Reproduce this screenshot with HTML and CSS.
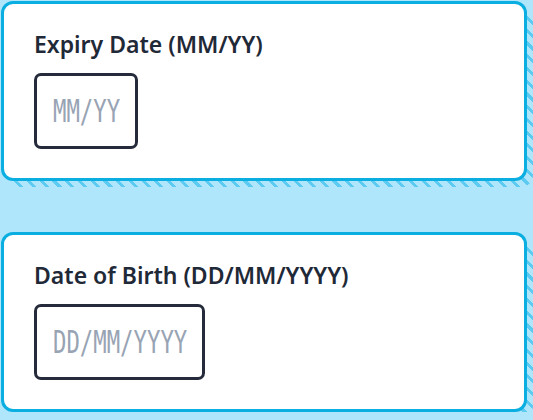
FILE: index.html
```html
<!DOCTYPE html>
<html lang="en">
<head>
<meta charset="utf-8">
<title>Date fields</title>
<link rel="stylesheet" href="styles.css">
</head>
<body>
  <div class="card">
    <label class="label" for="expiry">Expiry Date (MM/YY)</label>
    <div class="field">
      <input id="expiry" class="input w5" type="text" placeholder="MM/YY">
    </div>
  </div>
  <div class="card">
    <label class="label" for="dob">Date of Birth (DD/MM/YYYY)</label>
    <div class="field">
      <input id="dob" class="input w10" type="text" placeholder="DD/MM/YYYY">
    </div>
  </div>
</body>
</html>
```
FILE: styles.css
```css
html {
  background: #b0e6fb;
}
body {
  margin: 0;
  padding: 1px 6px 0 1px;
  font-family: "Noto Sans", "Open Sans", sans-serif;
}
.card {
  position: relative;
  display: flex;
  flex-direction: column;
  align-items: flex-start;
  gap: 14px;
  background: #fff;
  border: 3px solid #0aaee0;
  border-radius: 12px;
  padding: 25px 30px 29px;
  margin-bottom: 51px;
}
.card:last-child {
  margin-bottom: 0;
}
.card::before {
  content: "";
  position: absolute;
  top: 3px;
  left: 3px;
  right: -9px;
  bottom: -9px;
  z-index: -1;
  border-radius: 12px;
  background: repeating-linear-gradient(45deg, #5ccaf1 0 3px, transparent 3px 9px);
}
.label {
  font-size: 23px;
  font-weight: 600;
  line-height: 30px;
  color: #1f2937;
}
.field {
  display: flex;
  align-items: center;
  height: 70px;
  padding: 0 15px 0 16px;
  border: 3px solid #252b3a;
  border-radius: 7px;
  background: #fff;
}
.input {
  border: none;
  outline: none;
  padding: 0;
  margin: 0;
  background: transparent;
  font-family: "DejaVu Sans Mono", monospace;
  font-size: 22.3px;
  line-height: 30px;
  height: 30px;
  color: #1f2937;
  transform: scaleY(1.4);
}
.input::placeholder {
  color: #98a4b4;
  opacity: 1;
}
.w5 { width: 5ch; }
.w10 { width: 10ch; }
```
